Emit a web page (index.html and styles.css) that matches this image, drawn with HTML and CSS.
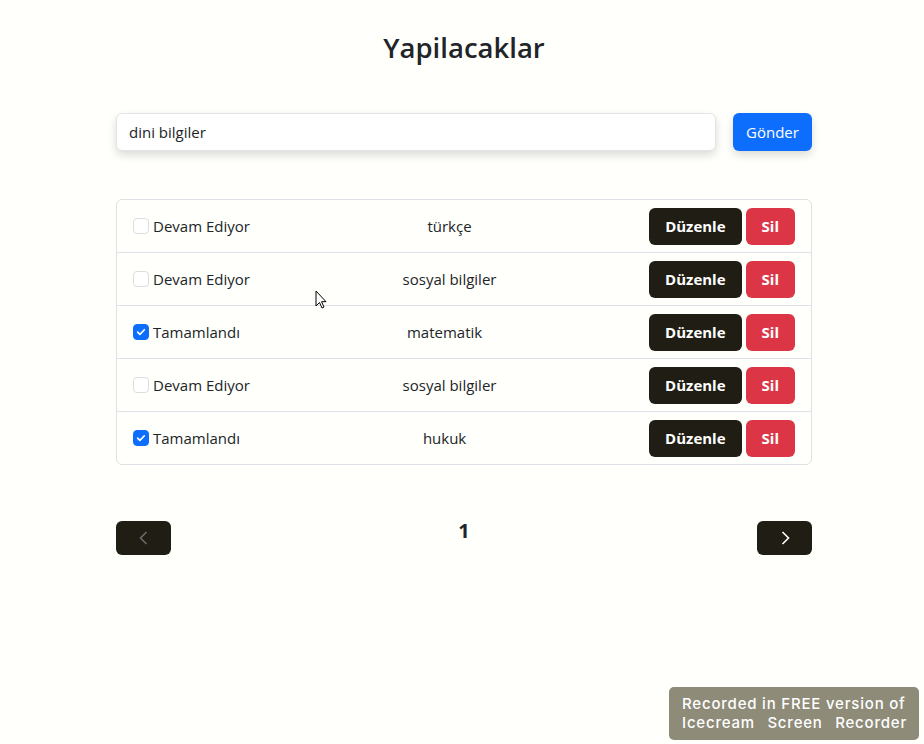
FILE: index.html
```html
<!DOCTYPE html>
<html lang="tr">
<head>
<meta charset="utf-8">
<title>Yapilacaklar</title>
<link rel="stylesheet" href="styles.css">
</head>
<body>
<div class="page">
  <main class="container">
    <h2 class="title">Yapilacaklar</h2>
    <form class="add-form">
      <input class="add-input" type="text" value="dini bilgiler">
      <button type="button" class="btn btn-primary">Gönder</button>
    </form>
    <ul class="todo-list">
      <li class="todo-item">
        <label class="check"><span class="box"></span><span>Devam Ediyor</span></label>
        <span class="todo-text">türkçe</span>
        <div class="actions"><button class="btn btn-dark">Düzenle</button><button class="btn btn-danger">Sil</button></div>
      </li>
      <li class="todo-item">
        <label class="check"><span class="box"></span><span>Devam Ediyor</span></label>
        <span class="todo-text">sosyal bilgiler</span>
        <div class="actions"><button class="btn btn-dark">Düzenle</button><button class="btn btn-danger">Sil</button></div>
      </li>
      <li class="todo-item">
        <label class="check"><span class="box checked"><svg viewBox="0 0 16 16" width="12" height="12"><path d="M3.5 8.2l3 3 6-6.2" fill="none" stroke="#fff" stroke-width="2.2" stroke-linecap="round" stroke-linejoin="round"/></svg></span><span>Tamamlandı</span></label>
        <span class="todo-text">matematik</span>
        <div class="actions"><button class="btn btn-dark">Düzenle</button><button class="btn btn-danger">Sil</button></div>
      </li>
      <li class="todo-item">
        <label class="check"><span class="box"></span><span>Devam Ediyor</span></label>
        <span class="todo-text">sosyal bilgiler</span>
        <div class="actions"><button class="btn btn-dark">Düzenle</button><button class="btn btn-danger">Sil</button></div>
      </li>
      <li class="todo-item">
        <label class="check"><span class="box checked"><svg viewBox="0 0 16 16" width="12" height="12"><path d="M3.5 8.2l3 3 6-6.2" fill="none" stroke="#fff" stroke-width="2.2" stroke-linecap="round" stroke-linejoin="round"/></svg></span><span>Tamamlandı</span></label>
        <span class="todo-text">hukuk</span>
        <div class="actions"><button class="btn btn-dark">Düzenle</button><button class="btn btn-danger">Sil</button></div>
      </li>
    </ul>
    <nav class="pager">
      <button class="btn btn-dark pager-btn" disabled><svg viewBox="0 0 16 16" width="16" height="16"><path d="M10.5 2 4.5 8l6 6" fill="none" stroke="#6b6b6b" stroke-width="1.6"/></svg></button>
      <span class="page-num">1</span>
      <button class="btn btn-dark pager-btn"><svg viewBox="0 0 16 16" width="16" height="16"><path d="M5.5 2l6 6-6 6" fill="none" stroke="#fff" stroke-width="1.6"/></svg></button>
    </nav>
  </main>
</div>
<svg class="cursor" viewBox="0 0 12 19" width="12" height="19"><path d="M1 1v15l3.5-3.5 2.5 5.5 2-1-2.5-5.3H11z" fill="#fff" stroke="#000" stroke-width="1"/></svg>
<div class="watermark"><div class="wm-line">Recorded in FREE version of</div><div class="wm-line wm-just">Icecream Screen Recorder</div></div>
</body>
</html>
```
FILE: styles.css
```css
* { box-sizing: border-box; }
html, body { margin: 0; padding: 0; }
body {
  background: #fffffb;
  color: #212529;
  font-family: "Open Sans", "Noto Sans", sans-serif;
  font-size: 15px;
  height: 744px;
  overflow: hidden;
  position: relative;
}
.page { padding-left: 4px; }
.container { width: 696px; margin: 0 auto; }
.title {
  margin: 0;
  padding-top: 28px;
  text-align: center;
  font-size: 27.5px;
  font-weight: 600;
  line-height: 40px;
}
.add-form {
  display: flex;
  gap: 17px;
  margin-top: 45px;
}
.add-input {
  width: 600px;
  height: 38px;
  border: 1px solid #e3e4e8;
  border-radius: 6px;
  padding: 0 12px;
  font: inherit;
  color: #212529;
  background: #fff;
  box-shadow: 0 4px 10px rgba(0,0,0,0.15);
  outline: none;
}
.btn {
  border: 0;
  border-radius: 6px;
  font: inherit;
  cursor: pointer;
  display: inline-flex;
  align-items: center;
  justify-content: center;
}
.btn-primary {
  width: 79px;
  height: 38px;
  background: #0d6efd;
  color: #fff;
  box-shadow: 0 4px 10px rgba(0,0,0,0.15);
}
.todo-list {
  list-style: none;
  margin: 48px 0 0;
  padding: 0;
  border: 1px solid #dee2e6;
  border-radius: 6px;
}
.todo-item {
  display: flex;
  justify-content: space-between;
  align-items: center;
  height: 53px;
  padding: 0 16px;
  border-top: 1px solid #dee2e6;
}
.todo-item:first-child { border-top: 0; height: 52px; }
.check { display: flex; align-items: center; gap: 4px; }
.box {
  width: 16px; height: 16px;
  border: 1px solid #dcdde0;
  border-radius: 4px;
  background: #fff;
  display: inline-flex; align-items: center; justify-content: center;
}
.box.checked { background: #0d6efd; border-color: #0d6efd; }
.actions { display: flex; gap: 4px; }
.btn-dark { background: #1f1d14; color: #fff; }
.actions .btn { height: 37px; padding: 0 16px; font-weight: 700; }
.btn-danger { background: #dc3545; color: #fff; }
.pager {
  display: flex;
  justify-content: space-between;
  align-items: center;
  margin-top: 56px;
}
.pager-btn { width: 55px; height: 34px; }
.pager-btn:disabled { cursor: default; }
.page-num { font-size: 20px; font-weight: 700; margin-top: -16px; }
.cursor { position: absolute; left: 315px; top: 290px; }
.watermark {
  position: absolute;
  left: 669px; top: 687px;
  width: 250px; height: 53px;
  background: #8e8b78;
  border-radius: 5px;
  color: #fff;
  font-family: "Inter", "Lato", sans-serif;
  font-size: 15px;
  font-weight: 500;
  line-height: 19px;
  letter-spacing: 0.8px;
  padding: 7px 12px 0 13px;
}
.wm-line { white-space: nowrap; }
.wm-just { white-space: normal; text-align: justify; text-align-last: justify; }
```
